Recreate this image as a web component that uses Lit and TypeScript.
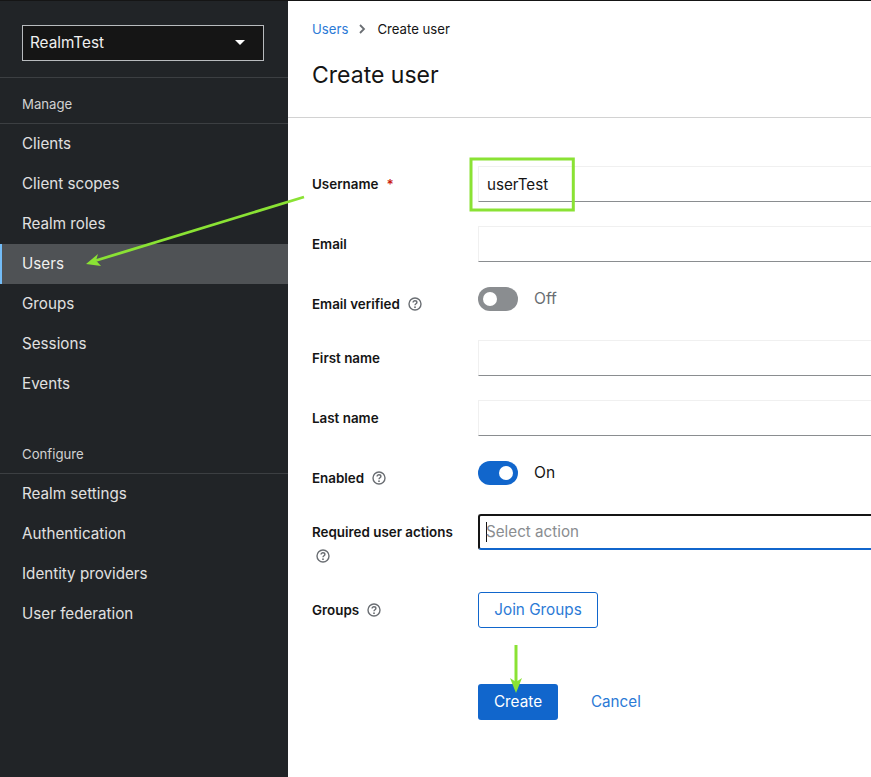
import { LitElement, html, css, svg } from "lit";
import { customElement } from "lit/decorators.js";

const help = html`<svg class="help" viewBox="0 0 14 14" width="14" height="14" aria-hidden="true">
  <circle cx="7" cy="7" r="6" fill="none" stroke="#6a6e73" stroke-width="1.4"></circle>
  <path d="M5.1 5.6C5.1 4.5 5.9 3.8 7 3.8s1.9.7 1.9 1.6c0 1.3-1.9 1.4-1.9 2.9" fill="none" stroke="#6a6e73" stroke-width="1.4"></path>
  <circle cx="7" cy="10.2" r=".9" fill="#6a6e73"></circle>
</svg>`;

const overlay = svg`
  <rect x="471" y="159" width="102.300" height="51" fill="none" stroke="#8ae234" stroke-width="3"></rect>
  <line x1="304" y1="197" x2="96" y2="260.500" stroke="#8ae234" stroke-width="2.800"></line>
  <path d="M86 264L98 254L96 260.500L101 266Z" fill="#8ae234"></path>
  <line x1="516" y1="645" x2="516" y2="682" stroke="#8ae234" stroke-width="3"></line>
  <path d="M516 693L510 678L516 682L522 678Z" fill="#8ae234"></path>
`;

@customElement("app-root")
export class AppRoot extends LitElement {
  static styles = css`
    :host {
      display: block;
      position: relative;
      width: 871px;
      height: 777px;
      overflow: hidden;
      background: #fff;
      font-family: Inter, "Noto Sans", sans-serif;
      font-size: 15px;
      color: #151515;
    }
    .layout {
      display: flex;
      height: 100%;
      border-top: 1px solid #151515;
      box-sizing: border-box;
    }
    .sidebar {
      flex: 0 0 288px;
      background: #212427;
      color: #e0e0e0;
      display: flex;
      flex-direction: column;
    }
    .realm-wrap {
      padding: 24px 24px 16px 22px;
      border-bottom: 1px solid #3c3f42;
    }
    .realm {
      box-sizing: border-box;
      height: 36px;
      background: #151515;
      border: 1px solid #b8bbbe;
      display: flex;
      align-items: center;
      justify-content: space-between;
      padding: 0 18px 2px 7px;
      font-size: 15.300px;
      color: #f0f0f0;
    }
    .caret {
      width: 0;
      height: 0;
      border-left: 5px solid transparent;
      border-right: 5px solid transparent;
      border-top: 5px solid #fff;
    }
    .section {
      height: 46px;
      box-sizing: border-box;
      padding: 17px 22px 0;
      font-size: 13.200px;
      line-height: 18px;
      color: #d2d2d2;
      border-bottom: 1px solid #3c3f42;
    }
    .section.second {
      margin-top: 30px;
      height: 40px;
      padding-top: 11px;
    }
    .item {
      height: 40px;
      box-sizing: border-box;
      display: flex;
      align-items: center;
      padding: 0 0 2px 22px;
      font-size: 15.200px;
      color: #e0e0e0;
    }
    .item.active {
      background: #4f5255;
      color: #f0f0f0;
      box-shadow: inset 2px 0 0 #73bcf7;
    }
    .main {
      flex: 1;
      min-width: 0;
      display: flex;
      flex-direction: column;
    }
    .head {
      height: 117px;
      box-sizing: border-box;
      padding: 18px 24px 0;
      border-bottom: 1px solid #d2d2d2;
    }
    .crumbs {
      display: flex;
      align-items: center;
      height: 20px;
      font-size: 13.200px;
      color: #151515;
    }
    .crumbs a {
      color: #2b7ad6;
    }
    .chev {
      width: 8px;
      height: 10px;
      margin: 0 11px 0 10px;
    }
    h1 {
      margin: 18px 0 0;
      font-size: 23px;
      line-height: 36px;
      font-weight: 400;
      color: #151515;
    }
    .form {
      padding: 48px 0 0 24px;
      display: grid;
      grid-template-columns: 166px 1fr;
      row-gap: 24px;
    }
    .label {
      padding-top: 8px;
      font-size: 13.400px;
      font-weight: 600;
      line-height: 21px;
      color: #151515;
    }
    .label .line {
      display: flex;
      align-items: center;
      height: 24px;
      margin-top: -2px;
    }
    .label .line + .line {
      margin-top: 0;
    }
    .help {
      margin-left: 8px;
      flex: none;
    }
    .line .help.solo {
      margin-left: 4px;
    }
    .req {
      color: #c9190b;
      margin-left: 8px;
      font-weight: 600;
    }
    .input {
      box-sizing: border-box;
      height: 36px;
      border: 1px solid #f0f0f0;
      border-bottom-color: #8a8d90;
      border-right: 0;
      display: flex;
      align-items: center;
      padding-left: 8px;
      font-size: 15.200px;
      color: #151515;
    }
    .input.focus {
      border: 2px solid #151515;
      border-bottom-color: #1166cc;
      border-right: 0;
      border-radius: 3px 0 0 3px;
      padding: 0 0 1px 6px;
      color: #8a8d90;
    }
    .cursor {
      width: 1px;
      height: 20px;
      background: #151515;
      margin-right: -1px;
    }
    .toggle-row {
      height: 30px;
      display: flex;
      align-items: flex-start;
      padding-top: 1px;
      box-sizing: border-box;
    }
    .toggle {
      width: 40px;
      height: 24px;
      border-radius: 12px;
      background: #8a8d90;
      display: flex;
      align-items: center;
      padding: 0 5px;
      box-sizing: border-box;
    }
    .toggle i {
      width: 14px;
      height: 14px;
      border-radius: 50%;
      background: #fff;
    }
    .toggle.on {
      background: #1166cc;
      justify-content: flex-end;
    }
    .state {
      margin-left: 16px;
      font-size: 15.600px;
      line-height: 24px;
      color: #6a6e73;
    }
    .state.on {
      color: #151515;
    }
    .btn {
      box-sizing: border-box;
      height: 36px;
      display: inline-flex;
      align-items: center;
      justify-content: center;
      border-radius: 3px;
      padding-bottom: 2px;
      font-size: 15.300px;
    }
    .btn.outline {
      width: 120px;
      border: 1px solid #1166cc;
      color: #2b7ad6;
    }
    .btn.primary {
      width: 80px;
      background: #1166cc;
      color: #fff;
    }
    .actions {
      grid-column: 2;
      display: flex;
      align-items: center;
      margin-top: 32px;
    }
    .cancel {
      margin-left: 33px;
      padding-bottom: 2px;
      font-size: 15.200px;
      color: #2b7ad6;
    }
    .overlay {
      position: absolute;
      inset: 0;
      pointer-events: none;
    }
  `;

  private items(names: string[], active = "") {
    return names.map(
      (n) => html`<div class="item ${n === active ? "active" : ""}">${n}</div>`
    );
  }

  render() {
    return html`
      <div class="layout">
        <nav class="sidebar">
          <div class="realm-wrap">
            <div class="realm"><span>RealmTest</span><span class="caret"></span></div>
          </div>
          <div class="section">Manage</div>
          ${this.items(
            ["Clients", "Client scopes", "Realm roles", "Users", "Groups", "Sessions", "Events"],
            "Users"
          )}
          <div class="section second">Configure</div>
          ${this.items(["Realm settings", "Authentication", "Identity providers", "User federation"])}
        </nav>
        <main class="main">
          <header class="head">
            <div class="crumbs">
              <a>Users</a>
              <svg class="chev" viewBox="0 0 8 10"><path d="M2 1l4 4-4 4" fill="none" stroke="#6a6e73" stroke-width="1.800"></path></svg>
              <span>Create user</span>
            </div>
            <h1>Create user</h1>
          </header>
          <div class="form">
            <div class="label">Username<span class="req">*</span></div>
            <div class="input">userTest</div>

            <div class="label">Email</div>
            <div class="input"></div>

            <div class="label"><div class="line">Email verified ${help}</div></div>
            <div class="toggle-row">
              <div class="toggle"><i></i></div><span class="state">Off</span>
            </div>

            <div class="label">First name</div>
            <div class="input"></div>

            <div class="label">Last name</div>
            <div class="input"></div>

            <div class="label"><div class="line">Enabled ${help}</div></div>
            <div class="toggle-row">
              <div class="toggle on"><i></i></div><span class="state on">On</span>
            </div>

            <div class="label">
              <div class="line">Required user actions</div>
              <div class="line">${html`<svg class="help solo" viewBox="0 0 14 14" width="14" height="14"><circle cx="7" cy="7" r="6" fill="none" stroke="#6a6e73" stroke-width="1.400"></circle><path d="M5.100 5.600C5.100 4.500 5.900 3.800 7 3.800s1.900.7 1.900 1.600c0 1.300-1.900 1.400-1.900 2.900" fill="none" stroke="#6a6e73" stroke-width="1.400"></path><circle cx="7" cy="10.200" r=".9" fill="#6a6e73"></circle></svg>`}</div>
            </div>
            <div class="input focus"><span class="cursor"></span>Select action</div>

            <div class="label"><div class="line">Groups ${help}</div></div>
            <div><span class="btn outline">Join Groups</span></div>

            <div class="actions">
              <span class="btn primary">Create</span><span class="cancel">Cancel</span>
            </div>
          </div>
        </main>
      </div>
      <svg class="overlay" width="871" height="777" viewBox="0 0 871 777">${overlay}</svg>
    `;
  }
}
